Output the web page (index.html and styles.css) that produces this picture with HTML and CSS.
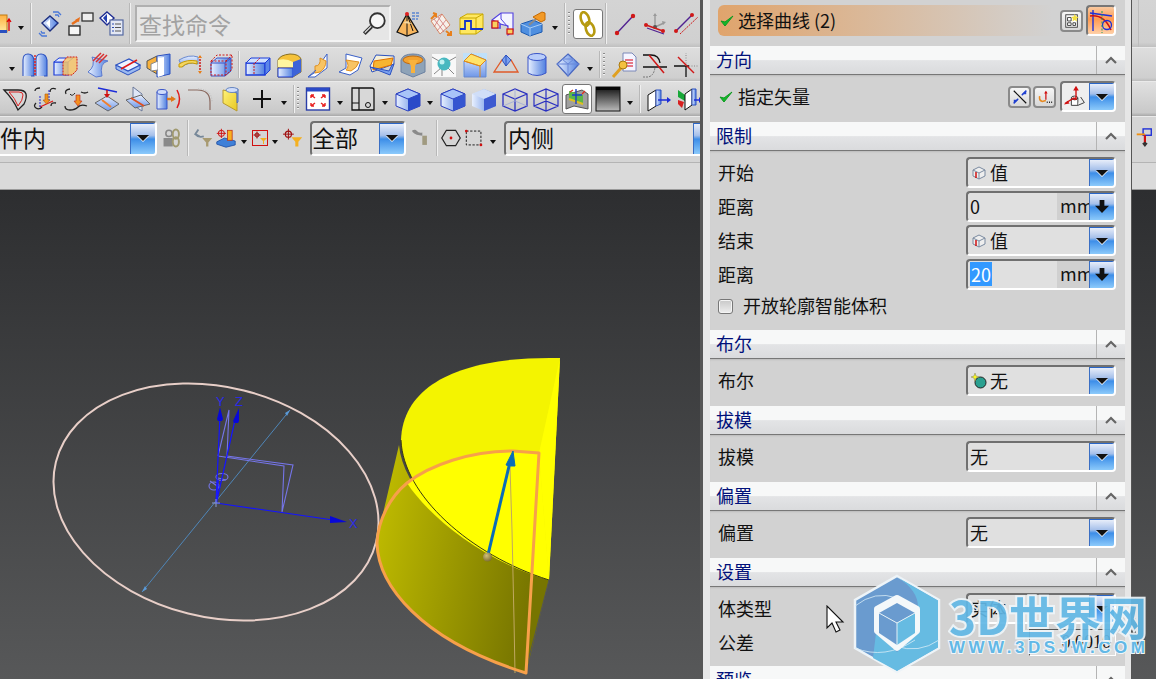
FILE: index.html
```html
<!DOCTYPE html>
<html lang="zh">
<head>
<meta charset="utf-8">
<title>拉伸</title>
<link rel="stylesheet" href="styles.css">
</head>
<body>
<svg class="defs" aria-hidden="true">
  <defs>
    <linearGradient id="gb" x1="0" y1="0" x2="1" y2="0"><stop offset="0" stop-color="#e8f0ff"/><stop offset="1" stop-color="#4f7fe0"/></linearGradient>
    <linearGradient id="gv" x1="0" y1="0" x2="0" y2="1"><stop offset="0" stop-color="#e8f0ff"/><stop offset="1" stop-color="#6f97e8"/></linearGradient>
    <linearGradient id="go" x1="0" y1="0" x2="0" y2="1"><stop offset="0" stop-color="#ffb040"/><stop offset="1" stop-color="#ffe9a0"/></linearGradient>
    <linearGradient id="gy" x1="0" y1="0" x2="1" y2="1"><stop offset="0" stop-color="#fff27a"/><stop offset="1" stop-color="#e8c820"/></linearGradient>
    <linearGradient id="gside" x1="0" y1="0" x2="1" y2="0.25"><stop offset="0" stop-color="#c4c000"/><stop offset="1" stop-color="#777500"/></linearGradient>
    <linearGradient id="gbk" x1="0" y1="0" x2="0" y2="1"><stop offset="0" stop-color="#111"/><stop offset="1" stop-color="#bbb"/></linearGradient>
    <radialGradient id="gball" cx="0.4" cy="0.35" r="0.7"><stop offset="0" stop-color="#d0c07a"/><stop offset="1" stop-color="#7a6a30"/></radialGradient>
  </defs>
</svg>

<div class="app">
  <header class="toolbars">
    <div class="row r1">
      <span class="ico w14"><svg class="i" viewBox="12 0 14 26"><rect x="8" y="4" width="11" height="17" fill="url(#go)" stroke="#c07a10"/><rect x="8" y="19" width="11" height="3" fill="#2a50c0"/><path d="M21 20V9M19 11l2-3 2 3" stroke="#e00000" stroke-width="1.3" fill="none"/></svg></span>
      <span class="dd"></span><span class="sep"></span>
      <span class="ico"><svg class="i" viewBox="0 0 26 26"><path d="M13 5l8 7-8 8-8-8z" fill="url(#gb)" stroke="#1c2f80" stroke-width="1.4"/><path d="M9 12l4-4v9z" fill="#fff"/><path d="M16 1h5l3 3M18 4h3l1 2M10 25H5l-3-3M8 22H5l-1-2" stroke="#4a78d8" stroke-width="1.3" fill="none"/></svg></span>
      <span class="ico"><svg class="i" viewBox="0 0 26 26"><rect x="14" y="2" width="11" height="8" fill="#eee" stroke="#333" stroke-width="1.3"/><rect x="1" y="15" width="11" height="9" fill="#f6f6f6" stroke="#222" stroke-width="1.3"/><path d="M4 13l6-4" stroke="#e8701c" stroke-width="2.4"/><path d="M12 6l-1 5-4-2z" fill="#e8701c"/></svg></span>
      <span class="ico"><svg class="i" viewBox="0 0 26 26"><path d="M8 1l7 6-7 7-7-7z" fill="#fff" stroke="#1c2a90" stroke-width="1.4"/><path d="M4 7l4-4v9z" fill="#2340b0"/><rect x="11" y="9" width="13" height="15" fill="#e4e8f4" stroke="#5468a0" stroke-width="1.2"/><path d="M16 13h6M16 16.500h6M16 20h6" stroke="#555"/><path d="M13 13h2M13 16.500h2M13 20h2" stroke="#2a4ab0"/></svg></span>
      <span class="sep"></span>
      <div class="search"><span class="search-text">查找命令</span>
        <svg class="search-ico" viewBox="0 0 22 22"><circle cx="13.500" cy="8.500" r="6.500" fill="#f6f6f6" stroke="#333" stroke-width="1.6"/><path d="M8.500 13.500L2 20" stroke="#333" stroke-width="3.400"/><path d="M8 13.500L2.500 19" stroke="#eee" stroke-width="1"/></svg>
      </div>
      <span class="ico"><svg class="i" viewBox="0 0 26 26"><path d="M1 21L11 3l11 18-11 4z" fill="#f7b65e" stroke="#111" stroke-width="1.3"/><path d="M11 3v22M11 3l6 17" stroke="#111" fill="none"/><path d="M7 12l4-2 5 3" fill="#f5d9a4" stroke="none"/><circle cx="11" cy="3" r="2" fill="#e02020"/><path d="M16 2h8M16 5h8M16 8h6" stroke="#2060d0" stroke-width="1.2" stroke-dasharray="3 1"/></svg></span>
      <span class="ico"><svg class="i" viewBox="0 0 26 26"><path d="M4 10L15 3l8 11-10 9q-4-6-9-13z" fill="#f6f0ea" stroke="#d88a68"/><path d="M7 8l10 13M11 6l9 12M15 3l-8 13M19 9l-9 11" stroke="#c66" stroke-width=".7"/><path d="M4 8l5-5M6 2l3 1v3" stroke="#e8801c" stroke-width="2" fill="none"/><path d="M24 24l-5-4M24 20v4h-4" stroke="#e8801c" stroke-width="2" fill="none"/></svg></span>
      <span class="ico"><svg class="i" viewBox="0 0 26 26"><path d="M2 7l7-4h16v15l-7 5H2z" fill="#ffe860" stroke="#c8a800"/><path d="M2 7h16v16M18 7l7-4" stroke="#c8a800" fill="none"/><path d="M2 18h5v-8h6v8h12" stroke="#1434c8" stroke-width="1.8" fill="none"/></svg></span>
      <span class="ico"><svg class="i" viewBox="0 0 26 26"><path d="M3 9l9-7h12v18l-5 4v-9l-8-2v4H3z" fill="#f4f4ff" stroke="#5040e0" stroke-width="1.1"/><path d="M3 9l8 3v6M12 2v6l7 8" stroke="#5040e0" fill="none"/><rect x="3" y="10" width="6" height="7" fill="#f8d060" stroke="#d01010" stroke-width="1.2"/><rect x="18" y="18" width="6" height="5" fill="#f8d060" stroke="#d01010" stroke-width="1.2"/></svg></span>
      <span class="ico"><svg class="i" viewBox="0 0 26 26"><path d="M1 13l12-4 9 4v8l-12 4-9-4z" fill="#4f8fe0" stroke="#1c5ab0"/><path d="M1 13l9 4 12-4M10 17v8" stroke="#a8cdf4" fill="none"/><path d="M9 14l7-6" stroke="#8a8a8a" stroke-width="2"/><path d="M13 6l9-5 3 1v7l-4 2z" fill="#f29a28" stroke="#c66a00"/></svg></span>
      <span class="dd"></span><span class="sep"></span><span class="grip"></span>
      <span class="btn-on"><svg class="i" viewBox="0 0 26 26"><g fill="none" stroke="#b69a10" stroke-width="2.600"><ellipse cx="10" cy="8" rx="4" ry="7" transform="rotate(-18 10 8)"/><ellipse cx="15" cy="18" rx="4" ry="7" transform="rotate(-18 15 18)"/></g></svg></span>
      <span class="sep"></span>
      <span class="ico"><svg class="i" viewBox="0 0 26 26"><path d="M5 22L21 5" stroke="#502090" stroke-width="1.4"/><circle cx="5" cy="22" r="2.200" fill="#d01818"/><circle cx="21" cy="5" r="2.200" fill="#d01818"/></svg></span>
      <span class="ico"><svg class="i" viewBox="0 0 26 26"><path d="M12 16V4M12 16l9-4" stroke="#999" stroke-width="1.4"/><path d="M10 5l2-3 2 3zM19 10l4 1-3 3z" fill="#999"/><circle cx="12" cy="16" r="2" fill="#555"/><path d="M4 17l17 6" stroke="#502090" stroke-width="1.2"/><path d="M3 14l17 6" stroke="#d01818" stroke-width="1.4"/><circle cx="3" cy="14" r="2" fill="#d01818"/><circle cx="20" cy="20" r="2" fill="#d01818"/></svg></span>
      <span class="ico"><svg class="i" viewBox="0 0 26 26"><path d="M2 20L18 4" stroke="#502090" stroke-width="1.4"/><path d="M6 23L24 6" stroke="#d01818" stroke-dasharray="2 1"/><circle cx="2" cy="20" r="2" fill="#d01818"/><circle cx="18" cy="4" r="2" fill="#d01818"/></svg></span>
      <span class="tail"><span class="tail-line"></span></span>
    </div>

    <div class="row r2">
      <span class="ico w5"></span><span class="dd"></span>
      <span class="ico"><svg class="i" viewBox="0 0 26 26"><path d="M1 24V8q0-6 5-6t6 6v16H9" fill="url(#gb)" stroke="#2a50c0" stroke-width="1.100"/><path d="M14 24V8q0-6 5-6t6 6v16h-3" fill="url(#gb)" stroke="#2a50c0" stroke-width="1.100"/><path d="M13 3v21" stroke="#e01818" stroke-dasharray="2 1" stroke-width="1.400"/></svg></span>
      <span class="ico"><svg class="i" viewBox="0 0 26 26"><path d="M1 10h14v13H1z" fill="url(#gb)" stroke="#1c3cd8" stroke-width="1.200"/><path d="M1 10l5-4h14l-5 4z" fill="#dfe8ff" stroke="#1c3cd8"/><path d="M10 10l4-5h10v13l-5 5h-9z" fill="#f6c66c" fill-opacity=".85" stroke="#d01818" stroke-dasharray="2 1"/></svg></span>
      <span class="ico"><svg class="i" viewBox="0 0 26 26"><path d="M8 5l16 4q-9 2-6 15l-6 1-8-5q8-6 4-15z" fill="url(#gb)" stroke="#5b7ad0"/><path d="M9 9L17 1M12 10l8-8M15 11l8-8" stroke="#d83030" stroke-width="1.500"/></svg></span>
      <span class="ico"><svg class="i" viewBox="0 0 26 26"><path d="M1 13v4l12 6 12-6v-4" fill="#9cbaf0" stroke="#2a50c0"/><path d="M1 13l13-6 11 6-12 6z" fill="#eef3ff" stroke="#2a50c0" stroke-width="1.200"/><path d="M6 17L22 8" stroke="#e01818" stroke-width="1.500"/></svg></span>
      <span class="ico"><svg class="i" viewBox="0 0 26 26"><path d="M1 9l10-5v18L1 16z" fill="#f8b23c" stroke="#555"/><path d="M11 4l13-2v20l-13 3z" fill="url(#gb)" stroke="#2a50c0"/><path d="M5 12l7-3v9l-7 1z" fill="#fff" stroke="#888"/><path d="M12 6l6-1v18l-6 2z" fill="#fff"/></svg></span>
      <span class="ico"><svg class="i" viewBox="0 0 26 26"><path d="M2 8q10-6 19-3v7q-9-3-16 3z" fill="url(#gv)" stroke="#6a8ad0"/><path d="M2 12q8-5 18-3v3q-9-3-15 3H2z" fill="#f4d660" stroke="#c89a00"/><path d="M23 4v17" stroke="#d01818" stroke-dasharray="2 1" stroke-width="1.500"/><path d="M21 6l2-3 2 3zM21 19l2 3 2-3z" fill="#e8801c"/></svg></span>
      <span class="ico"><svg class="i" viewBox="0 0 26 26"><path d="M3 11l6-5h14v13l-6 5H3z" fill="url(#gb)" stroke="#3a55c8"/><path d="M3 11h14v13M17 11l6-5" stroke="#3a55c8" fill="none"/><path d="M3 9l6-6h15v14l-6 6H3zM3 9h15v14M18 9l6-6" fill="none" stroke="#d01818" stroke-dasharray="2 1.500"/></svg></span>
      <span class="sep"></span>
      <span class="ico"><svg class="i" viewBox="0 0 26 26"><path d="M1 11h19v12H1z" fill="url(#gb)" stroke="#1c3cd8" stroke-width="1.300"/><path d="M1 11l5-5h19l-5 5z" fill="#cfe0ff" stroke="#1c3cd8"/><path d="M20 11l5-5v12l-5 5z" fill="#5c86e8" stroke="#1c3cd8"/><path d="M10 11l5-5M9 11v12" stroke="#d01818" stroke-dasharray="2 1"/></svg></span>
      <span class="ico"><svg class="i" viewBox="0 0 26 26"><path d="M2 8q2-5 12-6 9 0 11 5v13l-8 5H2z" fill="#f5c23a" stroke="#8a7020"/><path d="M2 8q8-2 15 2v5H2z" fill="#fff5a0"/><path d="M2 16h15v9H2z" fill="url(#gb)" stroke="#1c3cd8"/><path d="M17 10l8-3v13l-8 5z" fill="#3d63d8"/></svg></span>
      <span class="ico"><svg class="i" viewBox="0 0 26 26"><path d="M20 2v14L8 25H1l6-4q7-2 6-9z" fill="#fff" stroke="#3a60c8"/><path d="M8 14q6 0 5-8l6 3q0 7-6 11l-5 1z" fill="#f8c464" stroke="#e09020"/><path d="M1 25l8-7" stroke="#3a60c8"/></svg></span>
      <span class="ico"><svg class="i" viewBox="0 0 26 26"><path d="M8 2l16 4-4 12-8 5L1 20l7-4z" fill="#fff" stroke="#3a60c8"/><path d="M8 8l13 2q-2 6-8 9l-5-1q4-4 0-10z" fill="#f8c464" stroke="#e09020"/></svg></span>
      <span class="ico"><svg class="i" viewBox="0 0 26 26"><path d="M7 3l18 1v8L3 20l-2-6z" fill="#f6f0d8" stroke="#2a50c0"/><path d="M5 9l19-3-2 7-18 5z" fill="#f7b531" stroke="#e07000"/><path d="M1 15l20 8 4-11-2 1-3 6z" fill="#7aa0ee" stroke="#2a50c0"/></svg></span>
      <span class="ico"><svg class="i" viewBox="0 0 26 26"><path d="M1 8q2-6 12-6t12 6v12l-12 5-12-5z" fill="#8ea3b8" stroke="#6a80a0"/><ellipse cx="13" cy="8" rx="10" ry="4" fill="#f2a230" stroke="#c06a10"/><path d="M8 8h10l-3 6v7h-4v-7z" fill="#f8b23c"/></svg></span>
      <span class="ico"><svg class="i" viewBox="0 0 26 26"><rect x="1" y="2" width="24" height="23" fill="#f8f8f8"/><path d="M1 5l7 4M25 5l-7 4M11 24v-7M3 22l7-6M23 22l-6-6" stroke="#888"/><circle cx="13" cy="12" r="6.500" fill="#48b8c0"/><circle cx="11" cy="10" r="2.500" fill="#bff0f0"/></svg></span>
      <span class="ico"><svg class="i" viewBox="0 0 26 26"><rect x="1" y="1" width="24" height="24" fill="#bfe0fa"/><path d="M2 9l7-7 15 6v17H2z" fill="url(#gv)" stroke="#6a88c8"/><path d="M2 9l7-7 15 6-6 6z" fill="#ffe36a" stroke="#e08a18"/><path d="M2 9l16 5v11" fill="none" stroke="#e08a18"/></svg></span>
      <span class="ico"><svg class="i" viewBox="0 0 26 26"><path d="M1 20L9 8h9l7 12H14z" fill="none" stroke="#e05a28" stroke-width="1.300"/><path d="M9 8l4-5 5 5-5 6z" fill="#7aa0ee" stroke="#2a50c0"/><path d="M13 3v11" stroke="#2a50c0"/></svg></span>
      <span class="ico"><svg class="i" viewBox="0 0 26 26"><path d="M4 5v16q9 5 18 0V5z" fill="url(#gb)" stroke="#3a55c8"/><ellipse cx="13" cy="5" rx="9" ry="3.500" fill="#b9cdfa" stroke="#3a55c8"/></svg></span>
      <span class="ico"><svg class="i" viewBox="0 0 26 26"><path d="M13 2l11 10-11 12L2 12z" fill="url(#gb)" stroke="#4a68c0" stroke-width="1.200"/><path d="M2 12h22M7 7l6 5 6-5M13 12v12M7 7h12" stroke="#6a88d8" fill="none"/></svg></span>
      <span class="dd"></span><span class="sep"></span><span class="grip"></span>
      <span class="ico"><svg class="i" viewBox="0 0 26 26"><path d="M12 1h9l4 4v14H12z" fill="#f4f4ff" stroke="#7a88b8"/><path d="M14 8h8M14 11h8M14 14h8" stroke="#e05060" stroke-width="1.500"/><path d="M2 25l8-9" stroke="#e0a020" stroke-width="3"/><circle cx="12" cy="13" r="4" fill="#f4c040" stroke="#a87810"/></svg></span>
      <span class="ico"><svg class="i" viewBox="0 0 26 26"><path d="M1 15h24M1 3h8q8 0 9 8" stroke="#111" stroke-width="1.300" fill="none"/><path d="M1 25h5q6-1 7-10" stroke="#777" stroke-dasharray="2 1" fill="none"/><path d="M7 3l15 18" stroke="#d01818" stroke-width="1.500"/></svg></span>
      <span class="ico"><svg class="i" viewBox="0 0 26 26"><path d="M1 14h15M13 25V14" stroke="#111" stroke-width="1.300"/><path d="M13 14V1M16 14h9" stroke="#888" stroke-dasharray="1 1.500"/><path d="M5 5l16 16" stroke="#d01818" stroke-width="1.500"/></svg></span>
    </div>

    <div class="row r3">
      <span class="ico w29"><svg class="i" viewBox="0 0 26 26"><path d="M2 4h14q7 0 8 4t-2 10l-6 6q-5-11-14-20z" fill="#d8d8d8" stroke="#222" stroke-width="1.300"/><path d="M7 6h10q4 0 4 3 0 5-5 11-3-8-9-14z" fill="none" stroke="#d82020"/></svg></span>
      <span class="ico"><svg class="i" viewBox="0 0 26 26"><path d="M3 5q0-3 5-3M24 3q-6-2-6 3M4 17q-3 3 0 5t6-1M24 17q-5-1-5 3" stroke="#222" stroke-width="1.300" fill="none"/><path d="M8 21L21 15" stroke="#e01818" stroke-width="1.300"/><path d="M8 10v11" stroke="#2020d0" stroke-dasharray="2 1"/><path d="M17 4v11" stroke="#2020d0" stroke-dasharray="2 1"/><path d="M13 8v6h-2l3.500 4 3.500-4h-2V8z" fill="#f29020" stroke="#b06000" stroke-width=".6"/></svg></span>
      <span class="ico"><svg class="i" viewBox="0 0 26 26"><path d="M3 8q-2-4 4-5M18 6q4 2 7 0M2 20q0 4 5 4t8-3 9-1" stroke="#222" stroke-width="1.300" fill="none"/><path d="M7 8q2 3 5-1" stroke="#222" fill="none"/><path d="M13 9v6h-2l4 5 4-5h-2V9z" fill="#f29020" stroke="#c02010" stroke-width=".6"/></svg></span>
      <span class="ico"><svg class="i" viewBox="0 0 26 26"><path d="M4 2l19 4" stroke="#1c2cd8" stroke-width="1.500"/><path d="M1 17l12-7 12 8-11 7z" fill="url(#gv)" stroke="#666"/><path d="M13 4v7" stroke="#d01010" stroke-width="1.500"/><path d="M10 8h6l-3 4z" fill="#d01010"/><path d="M8 14l9 7" stroke="#f08030" stroke-width="2"/></svg></span>
      <span class="ico"><svg class="i" viewBox="0 0 26 26"><path d="M8 1l9 7v17L8 19z" fill="#dfe6f6" stroke="#6a7898"/><path d="M1 14l15-5 9 9-15 4z" fill="url(#gv)" stroke="#666"/><path d="M6 12l13 8" stroke="#e05020" stroke-width="2"/></svg></span>
      <span class="ico"><svg class="i" viewBox="0 0 26 26"><path d="M1 6h10v17H1z" fill="url(#gb)" stroke="#3a55c8"/><ellipse cx="6" cy="6" rx="5" ry="2.500" fill="#cfdcfa" stroke="#3a55c8"/><path d="M11 13h7" stroke="#e07818" stroke-width="2.400"/><path d="M15 10l5 3-5 3z" fill="#e07818"/><path d="M21 4q5 9 0 18" stroke="#e01818" stroke-width="1.500" fill="none"/></svg></span>
      <span class="ico"><svg class="i" viewBox="0 0 26 26"><path d="M1 4h9q13 0 13 12v8" stroke="#8a6a60" stroke-width="1.200" fill="none"/><path d="M11 3q14 0 14 13" stroke="#bbb" stroke-dasharray="1 1.500" fill="none"/></svg></span>
      <span class="ico"><svg class="i" viewBox="0 0 26 26"><path d="M5 4l14 3v18L5 17z" fill="url(#gy)" stroke="#b89a30"/><path d="M9 3q5-2 11 0v13l-1 1V7z" fill="#8fb4ea" stroke="#5070c0"/><ellipse cx="14" cy="4" rx="6" ry="2.500" fill="#cfdcfa" stroke="#6a88c0"/></svg></span>
      <span class="ico"><svg class="i" viewBox="0 0 26 26"><path d="M13 4v18M4 13h18" stroke="#111" stroke-width="2"/></svg></span>
      <span class="dd"></span><span class="sep"></span><span class="grip"></span>
      <span class="ico"><svg class="i" viewBox="0 0 26 26"><rect x="1.500" y="2" width="23" height="22" fill="#fff" stroke="#2a3ea8" stroke-width="1.400"/><rect x="2" y="2" width="22" height="3.500" fill="#2a4ac8"/><path d="M6 9l4 3M6 9h3M6 9v3M20 9l-4 3M20 9h-3M20 9v3M6 20l4-3M6 20h3M6 20v-3M20 20l-4-3M20 20h-3M20 20v-3" stroke="#e82020" stroke-width="1.400" fill="none"/></svg></span>
      <span class="dd"></span>
      <span class="ico"><svg class="i" viewBox="0 0 26 26"><path d="M2 2h20q2 0 2 2v20H2z" fill="#d8d8d8" stroke="#111" stroke-width="1.300"/><path d="M9 2v22M2 17h7" stroke="#111" stroke-width="1.200"/><circle cx="18" cy="19" r="2.500" fill="none" stroke="#111"/></svg></span>
      <span class="dd"></span>
      <span class="ico"><svg class="i" viewBox="0 0 26 26"><path d="M1 8l12-5 12 5v12l-12 5-12-5z" fill="url(#gb)" stroke="#2a3ec0"/><path d="M1 8l12 5 12-5-12-5z" fill="#a8c4f8" stroke="#2a3ec0"/><path d="M13 13l12-5v12l-12 5z" fill="#2a4ac8"/></svg></span>
      <span class="dd"></span>
      <span class="ico"><svg class="i" viewBox="0 0 26 26"><path d="M1 8l12-5 12 5v12l-12 5-12-5z" fill="url(#gb)" stroke="#2a3ec0"/><path d="M1 8l12 5 12-5-12-5z" fill="#a8c4f8" stroke="#2a3ec0"/><path d="M13 13l12-5v12l-12 5z" fill="#3556d0"/></svg></span>
      <span class="ico"><svg class="i" viewBox="0 0 26 26"><path d="M1 8l12-5 12 5v12l-12 5-12-5z" fill="url(#gb)"/><path d="M1 8l12 5 12-5-12-5z" fill="#d0def8"/><path d="M13 13l12-5v12l-12 5z" fill="#3d5ad0"/></svg></span>
      <span class="ico"><svg class="i" viewBox="0 0 26 26"><path d="M1 8l12-5 12 5v12l-12 5-12-5zM1 8l12 5 12-5M13 13v12" fill="none" stroke="#2a30c0" stroke-width="1.300"/><path d="M1 20l12-5 12 5M13 3v12" fill="none" stroke="#a0a8d8" stroke-width=".8"/></svg></span>
      <span class="ico"><svg class="i" viewBox="0 0 26 26"><path d="M1 8l12-5 12 5v12l-12 5-12-5zM1 8l12 5 12-5M13 13v12M1 20l12-5 12 5M13 3v12" fill="none" stroke="#2a30c0" stroke-width="1.200"/></svg></span>
      <span class="btn-on btn-3d"><svg class="i" viewBox="0 0 26 26"><path d="M2 9l16-5 6 4v15l-14-3-8 3z" fill="#a0a0a0" stroke="#555"/><path d="M5 5l14 4v9L5 13z" fill="#5cb848"/><path d="M5 13l14 5" stroke="#e0c020" stroke-width="2"/><path d="M12 3v15M8 9h10" stroke="#1c40c8" stroke-width="1.400"/><path d="M6 6l3-2M18 8l3-3" stroke="#e03020" stroke-width="1.400"/></svg></span>
      <span class="ico"><svg class="i" viewBox="0 0 26 26"><rect x="1" y="1" width="24" height="24" fill="url(#gbk)" stroke="#111"/><rect x="1" y="1" width="24" height="3" fill="#050505"/></svg></span>
      <span class="dd"></span><span class="sep"></span>
      <span class="ico"><svg class="i" viewBox="0 0 26 26"><path d="M2 9l8-5v16l-8 5z" fill="#fff" stroke="#111"/><path d="M10 4h5v14l-5 2z" fill="url(#gb)" stroke="#2a50c0"/><path d="M12 14h10" stroke="#1c2cd8" stroke-width="1.500"/><path d="M21 11l4 3-4 3z" fill="#1c2cd8"/></svg></span>
      <span class="ico"><svg class="i" viewBox="0 0 26 26"><path d="M1 4l7 5v6l-7-4z" fill="#18a838"/><path d="M1 14l6 2-2 6-4-4z" fill="#d82020"/><path d="M8 8l7-5v16l-7 5z" fill="#fff" stroke="#111"/><path d="M15 3h4v16h-4z" fill="url(#gb)" stroke="#2a50c0"/><path d="M17 14h6" stroke="#1c2cd8" stroke-width="1.500"/><path d="M22 11l3 3-3 3z" fill="#1c2cd8"/></svg></span>
    </div>

    <div class="row r4">
      <div class="combo combo-tb cb1"><span class="combo-txt">件内</span><span class="combo-btn"></span></div>
      <span class="ico w26 m2"><svg class="i s20" viewBox="0 0 26 26"><path d="M2 13h12v11H2z" fill="#8a8a8a"/><circle cx="9" cy="7" r="4" fill="none" stroke="#888" stroke-width="2"/><ellipse cx="18" cy="8" rx="4" ry="6" fill="none" stroke="#a09a70" stroke-width="2.500"/><ellipse cx="18" cy="18" rx="4" ry="6" fill="none" stroke="#a09a70" stroke-width="2.500"/></svg></span>
      <span class="sep"></span>
      <span class="ico w23"><svg class="i s20" viewBox="0 0 26 26"><path d="M3 8q4 5 11 3M7 2L3 8l6 3" stroke="#789" stroke-width="2.400" fill="none"/><path d="M12 13h13l-5 6v5h-3v-5z" fill="#a89a70"/></svg></span>
      <span class="ico w23"><svg class="i s20" viewBox="0 0 26 26"><path d="M1 18l10-5 14 4v5l-12 3-12-4z" fill="#3f80d8" stroke="#1c4aa0"/><rect x="15" y="3" width="6" height="13" fill="#f8b020" stroke="#c03010"/><circle cx="7" cy="7" r="4" fill="none" stroke="#d01010" stroke-width="1.300"/><path d="M7 1v12M1 7h12" stroke="#d01010" stroke-width="1.200"/></svg></span>
      <span class="dd"></span>
      <span class="ico w17"><svg class="redbox" viewBox="0 0 16 16"><rect x=".5" y=".5" width="15" height="15" fill="none" stroke="#d01010"/><path d="M5 1.500v7M1.500 5h7" stroke="#a01010"/><circle cx="5" cy="5" r="2" fill="none" stroke="#a01010"/><path d="M8 8h7l-3 3v3H11v-3z" fill="#f4b020"/></svg></span>
      <span class="dd"></span>
      <span class="ico w22"><svg class="i s20" viewBox="0 0 26 26"><path d="M7 1v14M0 8h14" stroke="#a01010" stroke-width="1.300"/><circle cx="7" cy="8" r="4" fill="none" stroke="#a01010" stroke-width="1.500"/><path d="M11 12h14l-5 6v6h-4v-6z" fill="#f4b020"/></svg></span>
      <div class="combo combo-tb cb2"><span class="combo-txt">全部</span><span class="combo-btn"></span></div>
      <span class="ico w28"><svg class="i s20" viewBox="0 0 26 26"><path d="M3 3q4-2 6 1t7 2v4q-8 0-13-5z" fill="#8a8a8a"/><path d="M16 10h6v12h-6z" fill="#a09a80"/></svg></span>
      <span class="sep"></span>
      <span class="ico w22"><svg class="i s20" viewBox="0 0 26 26"><path d="M7 3h12l6 10-6 10H7L1 13z" fill="none" stroke="#222" stroke-width="1.600"/><circle cx="13" cy="13" r="1.800" fill="#d01010"/></svg></span>
      <span class="ico w24"><svg class="i s20" viewBox="0 0 26 26"><rect x="3" y="4" width="19" height="18" fill="none" stroke="#222" stroke-width="1.300" stroke-dasharray="3 2"/><circle cx="3" cy="4" r="1.800" fill="#d01010"/><circle cx="22" cy="22" r="1.800" fill="#d01010"/></svg></span>
      <span class="dd"></span>
      <div class="combo combo-tb cb3"><span class="combo-txt">内侧</span><span class="combo-btn"></span></div>
      <span class="tail tail4"><svg class="i s20" viewBox="0 0 20 22"><rect x="9" y="1" width="9" height="7" fill="none" stroke="#1c2cd8" stroke-width="1.500"/><path d="M2 7h9" stroke="#f09010" stroke-width="2"/><path d="M11 8v11" stroke="#d01010" stroke-width="2.400"/><path d="M8 17l3 4 3-4-3-2z" fill="#333"/></svg></span>
    </div>
    <div class="row r5"></div>
  </header>

  <main class="viewport">
    <svg class="scene" viewBox="0 190 1156 489">
      <ellipse cx="216" cy="502" rx="165" ry="115" transform="rotate(14 216 502)" fill="none" stroke="#e8cfc8" stroke-width="2"/>
      <path d="M142 592L290 410" stroke="#4f86b8" stroke-width="1"/>
      <path d="M290 410l-5 3 2 3zM142 592l5-3-2-3z" fill="#5a9ad8"/>
      <g fill="none" stroke="#7575e8" stroke-width="1.100">
        <path d="M218 456L229 410 227 456 293 465 282 512 284 466 218 456"/>
        <ellipse cx="222" cy="477" rx="6" ry="3.500"/>
        <ellipse cx="214" cy="486" rx="5" ry="4"/>
        <path d="M218 478l8 2M210 481l10 7"/>
      </g>
      <g fill="none" stroke="#1414ff" stroke-width="1.200">
        <path d="M216 503L220 415M217 500L235 420M216 503L340 521"/>
      </g>
      <path d="M216.500 503L218 480" stroke="#1a1aff" stroke-width="1.800"/>
      <path d="M220 407l-3 12 1 2h4l1-2zM239 408l-6 13 1 2 4 0 1-2zM347 522l-17-6 0 7z" fill="#0808d8"/>
      <path d="M212 503h8M216 499v8" stroke="#8a9ad0"/>
      <g class="axis-label">
        <text x="216" y="406">Y</text>
        <text x="235" y="406">Z</text>
        <text x="349" y="528">X</text>
      </g>
      <path d="M399 445L378 535 377 543C378 585 420 640 526 673L549 580C470 555 403 495 399 445Z" fill="url(#gside)"/>
      <path d="M560 358C470 356 403 380 401 440C403 495 470 555 549 580Z" fill="#f4f400"/>
      <path d="M539 453L513 451C470 451 430 465 407 483C428 515 480 560 549 580Z" fill="#ffff00"/>
      <path d="M560 358L549 580 539 453Z" fill="#ffff00"/>
      <path d="M401 440C403 495 470 555 549 580" fill="none" stroke="#3a3a10" stroke-width="1"/>
      <path d="M549 580L527 665" stroke="#555" stroke-width="1"/>
      <path d="M510 467L512 530 514 620 515 673" fill="none" stroke="#c0a860" stroke-width="1"/>
      <path d="M539 453L513 451C470 451 430 465 407 483C390 497 378 520 377 543C378 585 420 640 526 673Z" fill="none" stroke="#f7a04a" stroke-width="3" stroke-linejoin="round"/>
      <path d="M487.500 557L510 462" stroke="#0a6cb8" stroke-width="3"/>
      <path d="M513 451L506 465 510 466 515 466Z" fill="#0a6cb8" stroke="#0a6cb8"/>
      <circle cx="487.500" cy="557" r="4.500" fill="url(#gball)"/>
    </svg>
  </main>

  <aside class="dialog">
    <section class="top-sec">
      <div class="pick">
        <svg class="check" viewBox="0 0 14 14"><path d="M1 7l4 5 8-10-8 6z" fill="#12b82a" stroke="#0e9a20" stroke-width="1"/></svg>
        <span class="pick-txt">选择曲线 (2)</span>
        <span class="mini-btn"><svg class="mini-s" viewBox="0 0 18 18"><rect x="2" y="2" width="13" height="14" fill="#fff" stroke="#333"/><path d="M4 5h4v4H4zM4 11h4v3H4zM10 11h3v3h-3z" fill="none" stroke="#333"/><path d="M12 1l1.500 3 3 .5-2.500 2 .5 3-2.500-1.500-2.500 1.500.5-3-2-2 3-.5z" fill="#f4e040"/></svg></span>
        <span class="big-btn"><svg class="big-s" viewBox="0 0 26 26"><path d="M2 5l22 3" stroke="#1c30d8" stroke-width="1.400"/><path d="M5 2v21" stroke="#1c30d8" stroke-width="1.400"/><path d="M2 8q14-2 21 14" fill="none" stroke="#d01010" stroke-width="1.600"/><circle cx="19" cy="17" r="4.500" fill="none" stroke="#1c30d8" stroke-width="1.300"/><path d="M14 3v22" stroke="#18a060" stroke-dasharray="2 1.500"/></svg></span>
      </div>
    </section>

    <section class="sec">
      <h2 class="head"><span>方向</span><span class="collapse"><svg class="chev" viewBox="0 0 12 8"><path d="M1 7l5-5 5 5" fill="none" stroke="#666" stroke-width="2.200"/></svg></span></h2>
      <div class="body center">
        <svg class="check check2" viewBox="0 0 14 14"><path d="M1 7l4 5 8-10-8 6z" fill="#12b82a" stroke="#0e9a20" stroke-width="1"/></svg>
        <span class="lbl">指定矢量</span>
        <span class="vec-btns">
          <span class="mini-btn"><svg class="mini-s" viewBox="0 0 18 18"><path d="M2 2l14 14" stroke="#111" stroke-width="1.300"/><path d="M16 2l-5 5M2 16l5-5" stroke="#2040d0" stroke-width="1.600"/><path d="M16 1v5h-5zM2 17v-5h5z" fill="#2040d0"/></svg></span>
          <span class="mini-btn"><svg class="mini-s" viewBox="0 0 18 18"><path d="M10 12V3" stroke="#d01010" stroke-width="1.400"/><path d="M8 5l2-3 2 3z" fill="#d01010"/><path d="M3 8q-1 5 3 6l4-1" fill="none" stroke="#e88a20" stroke-width="1.800"/><path d="M11 15h1M13.500 15h1M16 15h1" stroke="#111" stroke-width="1.600"/></svg></span>
          <span class="vec-combo">
            <span class="vec-ico"><svg class="big-s" viewBox="0 0 28 26"><path d="M9 14v8h7V14z" fill="#fff" stroke="#333"/><ellipse cx="12.500" cy="14" rx="3.500" ry="2" fill="#eee" stroke="#333"/><path d="M16 22l7-3-4-6" fill="#eee" stroke="#333"/><path d="M14 16V3" stroke="#d01010" stroke-width="1.500"/><path d="M11 6l3-5 3 5z" fill="#d01010"/><path d="M12 14L2 20" stroke="#d01010" stroke-width="1.500"/><path d="M1 21l6-1-2-3z" fill="#d01010"/><circle cx="13" cy="15" r="1.500" fill="#d01010"/></svg></span>
            <span class="combo-btn"></span>
          </span>
        </span>
      </div>
    </section>

    <section class="sec">
      <h2 class="head"><span>限制</span><span class="collapse"><svg class="chev" viewBox="0 0 12 8"><path d="M1 7l5-5 5 5" fill="none" stroke="#666" stroke-width="2.200"/></svg></span></h2>
      <div class="body limit">
        <div class="field"><span class="lbl">开始</span>
          <div class="combo"><svg class="cube" viewBox="0 0 16 16"><path d="M2 5l6-3 6 3v6l-6 3-6-3z" fill="#eee" stroke="#7a8aa0"/><path d="M2 5l6 3 6-3M8 8v6" fill="none" stroke="#7a8aa0"/><path d="M5 13V7" stroke="#d01010" stroke-width="1.500"/></svg><span class="combo-txt">值</span><span class="combo-btn"></span></div></div>
        <div class="field"><span class="lbl">距离</span>
          <div class="combo"><span class="combo-txt num">0</span><span class="unit">mm</span><span class="combo-btn down"></span></div></div>
        <div class="field"><span class="lbl">结束</span>
          <div class="combo"><svg class="cube" viewBox="0 0 16 16"><path d="M2 5l6-3 6 3v6l-6 3-6-3z" fill="#eee" stroke="#7a8aa0"/><path d="M2 5l6 3 6-3M8 8v6" fill="none" stroke="#7a8aa0"/><path d="M5 13V7" stroke="#d01010" stroke-width="1.500"/></svg><span class="combo-txt">值</span><span class="combo-btn"></span></div></div>
        <div class="field"><span class="lbl">距离</span>
          <div class="combo"><span class="combo-txt num"><span class="sel">20</span></span><span class="unit">mm</span><span class="combo-btn down"></span></div></div>
        <label class="check-row"><span class="box"></span><span class="lbl">开放轮廓智能体积</span></label>
      </div>
    </section>

    <section class="sec">
      <h2 class="head"><span>布尔</span><span class="collapse"><svg class="chev" viewBox="0 0 12 8"><path d="M1 7l5-5 5 5" fill="none" stroke="#666" stroke-width="2.200"/></svg></span></h2>
      <div class="body center between"><span class="lbl">布尔</span>
        <div class="combo"><svg class="cube" viewBox="0 0 16 16"><circle cx="9.500" cy="9.500" r="5.500" fill="#2aa090" stroke="#222"/><path d="M4 0l1 3 3.500 1L5 5 4 8.500 3 5 0 4l3-1z" fill="#f8f820" stroke="#665" stroke-width=".4"/></svg><span class="combo-txt">无</span><span class="combo-btn"></span></div>
      </div>
    </section>

    <section class="sec">
      <h2 class="head"><span>拔模</span><span class="collapse"><svg class="chev" viewBox="0 0 12 8"><path d="M1 7l5-5 5 5" fill="none" stroke="#666" stroke-width="2.200"/></svg></span></h2>
      <div class="body center between"><span class="lbl">拔模</span>
        <div class="combo"><span class="combo-txt num">无</span><span class="combo-btn"></span></div>
      </div>
    </section>

    <section class="sec">
      <h2 class="head"><span>偏置</span><span class="collapse"><svg class="chev" viewBox="0 0 12 8"><path d="M1 7l5-5 5 5" fill="none" stroke="#666" stroke-width="2.200"/></svg></span></h2>
      <div class="body center between"><span class="lbl">偏置</span>
        <div class="combo"><span class="combo-txt num">无</span><span class="combo-btn"></span></div>
      </div>
    </section>

    <section class="sec">
      <h2 class="head"><span>设置</span><span class="collapse"><svg class="chev" viewBox="0 0 12 8"><path d="M1 7l5-5 5 5" fill="none" stroke="#666" stroke-width="2.200"/></svg></span></h2>
      <div class="body settings">
        <div class="field"><span class="lbl">体类型</span>
          <div class="combo"><span class="combo-txt num">实体</span><span class="combo-btn"></span></div></div>
        <div class="field"><span class="lbl">公差</span>
          <div class="tol">0.0010</div></div>
      </div>
    </section>

    <section class="sec">
      <h2 class="head"><span>预览</span><span class="collapse"><svg class="chev" viewBox="0 0 12 8"><path d="M1 7l5-5 5 5" fill="none" stroke="#666" stroke-width="2.200"/></svg></span></h2>
    </section>
  </aside>

  <svg class="cursor" viewBox="0 0 20 28"><path d="M1 1v22l5-5 4 9 4-2-4-8h7z" fill="#fff" stroke="#111" stroke-width="1.100"/></svg>

  <div class="mark">
    <svg class="mark-logo" viewBox="853 574 88 100">
      <path d="M897 576L939 600V648L897 672 855 648V600Z" fill="#6a9bcf" stroke="#eef4f8" stroke-width="2.500"/>
      <path d="M897 577L938 600.500V647.500L897 671 873 658 876 633 897 652 918 633V607Q918 590 897 577Z" fill="#66bbe2"/>
      <path d="M855 648q30 12 60-8M855 606q20-16 42-8M939 640q-20 14-44 6" fill="none" stroke="#d8ecf6" stroke-width=".8"/>
      <path d="M897 598L917 609V631L897 648 877 631V609Z" fill="#f4f8fa" stroke="#f4f8fa" stroke-width="6" stroke-linejoin="round"/>
      <path d="M897 603L915 613 897 623 879 613Z" fill="#6a9bcf"/>
      <path d="M879 613L897 623V645L879 633Z" fill="#6a9bcf"/>
      <path d="M915 613L897 623V645L915 633Z" fill="#66bbe2"/>
      <path d="M879 613L897 623 915 613M897 623V645" fill="none" stroke="#e4f0f6"/>
    </svg>
    <div class="mark-text">
      <div class="mark-big">3D世界网</div>
      <div class="mark-small">WWW.3DSJW.COM</div>
    </div>
  </div>
</div>
</body>
</html>
```
FILE: styles.css
```css
* { box-sizing: border-box; }
html, body { margin: 0; padding: 0; height: 100%; overflow: hidden; }
body { font-family: "Noto Sans CJK SC", "Liberation Sans", sans-serif; color: #111; background: #3a3b3d; }
.defs { position: absolute; width: 0; height: 0; }

.app { position: relative; width: 1156px; height: 679px; display: flex; flex-direction: column; overflow: hidden; }
.toolbars { flex: none; display: flex; flex-direction: column; }
.row { display: flex; align-items: center; border-bottom: 1px solid #eaeaea; white-space: nowrap; overflow: hidden; }
.r1 { height: 48px; background: linear-gradient(#d4d4d4, #d0d0d0 90%, #c0c0c0); }
.r2 { height: 34px; background: linear-gradient(#dedede, #cfcfcf 90%, #bcbcbc); }
.r3 { height: 35px; background: linear-gradient(#e0e0e0, #c9c9c9 90%, #a8a8a8); }
.r4 { height: 46px; background: #d5d5d5; border-bottom: 1px solid #b4b4b4; padding-bottom: 3px; }
.r5 { height: 27px; background: #dadada; border-bottom: 1px solid #9a9a9a; }

.ico { flex: none; width: 31px; height: 28px; display: flex; align-items: center; justify-content: center; overflow: hidden; }
.i { width: 26px; height: 26px; display: block; flex: none; }
.i.s20 { width: 20px; height: 20px; }
.redbox { width: 16px; height: 16px; display: block; }
.w5 { width: 5px; } .w14 { width: 14px; } .w17 { width: 17px; } .w22 { width: 22px; }
.w23 { width: 23px; } .w24 { width: 24px; } .w26 { width: 26px; } .w28 { width: 28px; } .w29 { width: 29px; }
.m2 { margin-left: 2px; }
.w14 .i { width: 14px; }
.dd { flex: none; width: 14px; height: 16px; display: flex; align-items: flex-end; justify-content: center; }
.dd::after { content: ""; border: 3.5px solid transparent; border-top: 4px solid #111; border-bottom: 0; margin-bottom: 2px; }
.sep { flex: none; width: 6px; align-self: stretch; margin: 3px 0; display: flex; justify-content: center; }
.sep::after { content: ""; width: 2px; background: linear-gradient(90deg, #b8b8b8 50%, #f0f0f0 50%); }
.grip { flex: none; width: 5px; height: 24px; background: repeating-linear-gradient(#8a8a8a 0 1px, #f4f4f4 1px 2px, transparent 2px 4px); background-size: 2px 100%; background-repeat: no-repeat; background-position: left center; }
.btn-on { flex: none; width: 30px; height: 30px; display: flex; align-items: center; justify-content: center; background: #fff; border: 1px solid #777; border-radius: 3px; }
.btn-3d { margin-left: 1px; }

.search { flex: none; width: 256px; height: 37px; margin: 0 2px; padding: 0 0 0 2px; display: flex; align-items: center; justify-content: space-between; background: #e6e6e6; border: 2px solid #b0b0b0; border-right-color: #f4f4f4; border-bottom-color: #f4f4f4; }
.search-text { font-size: 23px; color: #a2a2a2; }
.search-ico { width: 25px; height: 25px; display: block; margin-right: 2px; }

.tail { flex: none; margin-left: auto; width: 18px; align-self: stretch; display: flex; justify-content: flex-start; }
.tail-line { width: 1px; background: #bdbdbd; }
.tail4 { width: 22px; align-items: center; }

.combo { flex: none; width: 150px; height: 31px; display: flex; align-items: center; background: #e0e0e0; border: 2px solid #fff; border-top-color: #707070; border-left-color: #707070; border-radius: 4px; overflow: hidden; }
.combo-txt { flex: 1; font-size: 18px; line-height: 1; white-space: nowrap; padding-left: 3px; padding-bottom: 2px; }
.combo .num { padding-left: 2px; }
.combo-btn { flex: none; width: 25px; height: 100%; display: flex; align-items: center; justify-content: center; background: linear-gradient(#eef2fb, #a6c0ea 40%, #3d8ee8 52%, #8ccafb); border-left: 1px solid #3a6fc4; box-shadow: inset 0 1px 0 #2a66c8; }
.combo-btn::after { content: ""; border: 6px solid transparent; border-top: 6px solid #111; border-bottom: 0; filter: drop-shadow(0 1px 0 #fff); }
.combo-btn.down::after { width: 14px; height: 13px; border: 0; background: #111; clip-path: polygon(33% 0, 67% 0, 67% 45%, 100% 45%, 50% 100%, 0 45%, 33% 45%); filter: none; }
.combo-tb { height: 35px; }
.combo-tb .combo-txt { font-size: 23px; padding-left: 0; }
.cb1 { width: 157px; border-left: 0; border-radius: 0 4px 4px 0; }
.cb2 { width: 96px; margin-left: 6px; }
.cb3 { width: 216px; margin-left: 4px; }
.cb3 .combo-txt { padding-left: 2px; }
.cube { flex: none; width: 16px; height: 16px; margin-left: 3px; display: block; }
.cube + .combo-txt { padding-left: 3px; }
.unit { flex: none; width: 32px; height: 100%; background: #d0d0d0; font-size: 18px; line-height: 25px; padding-left: 3px; overflow: hidden; }
.sel { background: #3399ff; color: #fff; display: inline-block; padding: 1px 1px; line-height: 22px; }

.viewport { flex: 1; min-height: 0; background: linear-gradient(#2d2e30, #575859); }
.scene { width: 100%; height: 100%; display: block; }
.axis-label text { font: 13px "Liberation Sans", sans-serif; fill: #2a2ae8; }

.dialog { position: absolute; left: 700px; top: 0; width: 432px; height: 679px; padding: 0 6px 0 10px; background: #e6e6e6; border-left: 3px solid #555; border-right: 1px solid #555; display: flex; flex-direction: column; }
.dialog > section { margin-left: -3px; margin-right: 0; }
.top-sec { flex: none; height: 46px; background: #d2d2d2; padding: 5px 9px 0 8px; }
.pick { height: 31px; display: flex; align-items: center; border-radius: 6px; background: linear-gradient(90deg, #e0a46c, #d2d2d2 84%); padding-left: 2px; }
.check { flex: none; width: 14px; height: 14px; display: block; }
.pick-txt { flex: 1; margin-left: 4px; font-size: 18px; line-height: 1; padding-bottom: 2px; }
.mini-btn { flex: none; width: 23px; height: 22px; display: flex; align-items: center; justify-content: center; background: linear-gradient(#f6f6f6, #d8d8d8); border: 2px solid #8a8a8a; border-radius: 4px; }
.mini-s { width: 16px; height: 16px; display: block; }
.big-btn { flex: none; width: 30px; height: 31px; margin-left: 3px; display: flex; align-items: center; justify-content: center; background: linear-gradient(#f9c9a0, #ff9a50 45%, #ffd0a8); border: 2px solid #777; border-bottom-color: #fff; border-right-color: #fff; border-radius: 4px; }
.big-s { width: 26px; height: 26px; display: block; }

.sec { flex: none; }
.head { margin: 0; height: 29px; display: flex; justify-content: space-between; font-weight: 400; font-size: 18px; line-height: 26px; color: #00107a; padding-left: 6px; background: linear-gradient(#f7f8f8 50%, #e3e4e6 52%, #dadbdd); border-bottom: 1px solid #777; overflow: hidden; }
.collapse { width: 29px; display: flex; align-items: center; justify-content: center; border-left: 1px solid #b4b4b4; }
.chev { width: 12px; height: 8px; display: block; }
.body { height: 47px; background: #d2d2d2; padding: 0 9px 0 8px; box-shadow: inset 0 2px 2px -1px #bbb; }
.center { display: flex; align-items: center; padding-bottom: 4px; }
.between { justify-content: space-between; }
.lbl { font-size: 18px; line-height: 1; padding-bottom: 2px; }
.check2 { margin: 0 5px 0 1px; }
.vec-btns { margin-left: auto; display: flex; align-items: center; gap: 2px; }
.vec-combo { flex: none; width: 56px; height: 31px; margin-left: 2px; display: flex; border: 2px solid #777; border-bottom-color: #fff; border-right-color: #fff; border-radius: 4px; overflow: hidden; background: #eee; }
.vec-ico { flex: 1; display: flex; align-items: center; justify-content: center; }
.limit { height: 179px; padding-top: 6px; display: flex; flex-direction: column; gap: 3px; }
.settings { height: 79px; padding-top: 6px; display: flex; flex-direction: column; gap: 3px; }
.field { flex: none; height: 31px; display: flex; align-items: center; justify-content: space-between; }
.check-row { display: flex; align-items: center; gap: 10px; margin-top: 1px; height: 24px; }
.box { width: 15px; height: 15px; background: linear-gradient(#c8c8c8, #eee); border: 1px solid #777; border-radius: 3px; box-shadow: inset 0 0 0 1px #f4f4f4; }
.tol { width: 87px; height: 27px; background: #dedede; border: 1px solid #555; border-right-color: #fff; border-bottom-color: #fff; text-align: right; font: 18px/25px "Liberation Serif", serif; padding-right: 4px; color: #111; }

.cursor { position: absolute; left: 826px; top: 605px; width: 20px; height: 28px; }
.mark { position: absolute; left: 853px; top: 574px; display: flex; gap: 8px; }
.mark-logo { width: 88px; height: 100px; display: block; flex: none; }
.mark-text { width: 200px; margin-top: 16px; }
.mark-big { font-size: 46px; line-height: 50px; font-weight: 700; color: #62b8e6; -webkit-text-stroke: 4px #eef5f9; paint-order: stroke fill; white-space: nowrap; opacity: .92; }
.mark-small { font: 700 17px/16px "Liberation Sans", sans-serif; letter-spacing: 3.500px; color: #62b8e6; -webkit-text-stroke: 2px #f0f6fa; paint-order: stroke fill; white-space: nowrap; }
```
